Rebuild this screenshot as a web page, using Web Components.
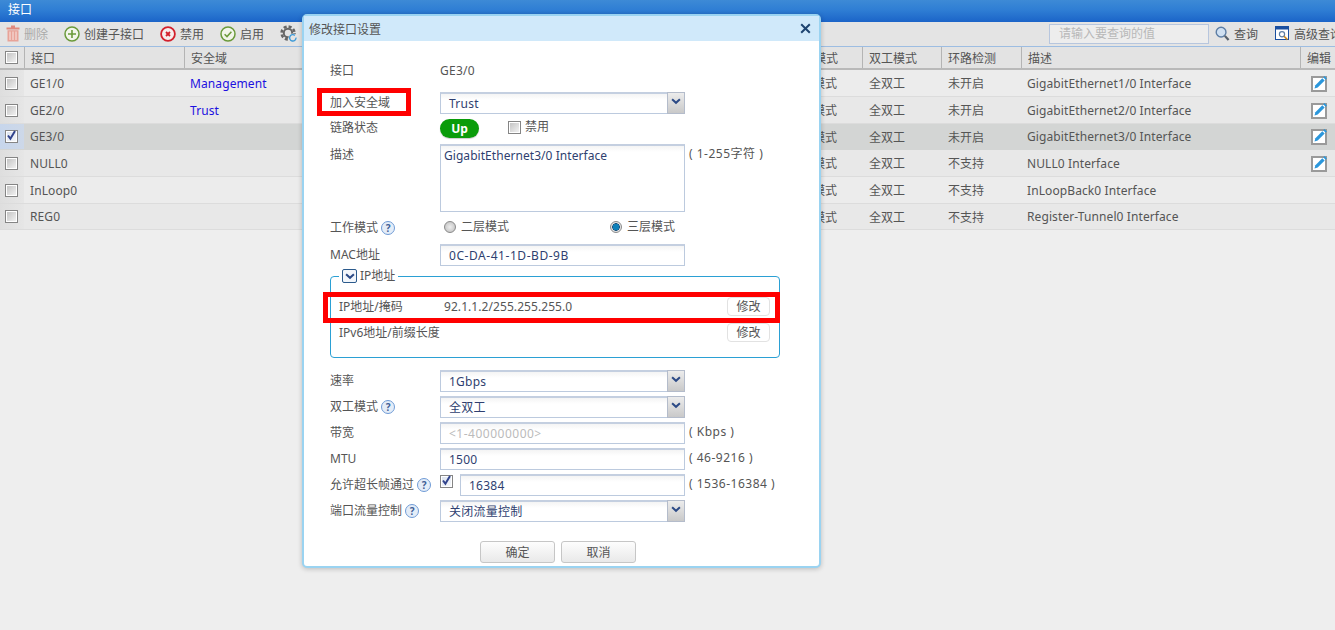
<!DOCTYPE html>
<html lang="zh">
<head>
<meta charset="utf-8">
<title>接口</title>
<style>
  html, body { margin: 0; padding: 0; height: 100%; overflow: hidden; background: #eeeeee; }
  body { font: 12px "Noto Sans", "Noto Sans CJK SC", sans-serif; color: #555; }
</style>
</head>
<body>
<if-app>
  <if-titlebar>接口</if-titlebar>
  <if-toolbar></if-toolbar>
  <if-table></if-table>
  <if-dialog heading="修改接口设置">
    <form-row center>
      <span slot="label">接口</span>
      <span style="letter-spacing:.25px">GE3/0</span>
    </form-row>
    <form-row style="margin-top:11px">
      <span slot="label">加入安全域</span>
      <text-box select>Trust</text-box>
    </form-row>
    <form-row style="margin-top:3px">
      <span slot="label">链路状态</span>
      <link-state></link-state>
    </form-row>
    <form-row style="margin-top:5px">
      <span slot="label">描述</span>
      <text-box tall>GigabitEthernet3/0 Interface</text-box>
      <span slot="suffix">( 1-255字符 )</span>
    </form-row>
    <form-row style="margin-top:5px" help>
      <span slot="label">工作模式</span>
      <mode-choice></mode-choice>
    </form-row>
    <form-row style="margin-top:5px">
      <span slot="label">MAC地址</span>
      <text-box style="letter-spacing:.55px">0C-DA-41-1D-BD-9B</text-box>
    </form-row>
    <ip-group></ip-group>
    <form-row style="margin-top:12px">
      <span slot="label">速率</span>
      <text-box select>1Gbps</text-box>
    </form-row>
    <form-row style="margin-top:4px" help>
      <span slot="label">双工模式</span>
      <text-box select>全双工</text-box>
    </form-row>
    <form-row style="margin-top:4px">
      <span slot="label">带宽</span>
      <text-box muted style="letter-spacing:.5px">&lt;1-400000000&gt;</text-box>
      <span slot="suffix">( Kbps )</span>
    </form-row>
    <form-row style="margin-top:4px">
      <span slot="label">MTU</span>
      <text-box>1500</text-box>
      <span slot="suffix">( 46-9216 )</span>
    </form-row>
    <form-row style="margin-top:4px" help>
      <span slot="label">允许超长帧通过</span>
      <jumbo-field>16384</jumbo-field>
      <span slot="suffix">( 1536-16384 )</span>
    </form-row>
    <form-row style="margin-top:4px" help>
      <span slot="label">端口流量控制</span>
      <text-box select>关闭流量控制</text-box>
    </form-row>
    <dialog-actions></dialog-actions>
    <red-mark style="left:13px;top:72px;width:94px;height:28px"></red-mark>
    <red-mark style="left:19px;top:276px;width:457px;height:31px"></red-mark>
  </if-dialog>
</if-app>

<script>
const ICONS = {
  trash: `<svg width="14" height="17" viewBox="0 0 14 17"><path d="M5 1.5h4M0.5 3.6h13" stroke="#e0897d" stroke-width="2" fill="none"/><path d="M1.5 5.2h11v11.3h-11z" fill="#e8a398"/><path d="M4 6.5v8.5M7 6.5v8.5M10 6.5v8.5" stroke="#f6dcd7" stroke-width="1.2"/></svg>`,
  plus: `<svg width="16" height="16" viewBox="0 0 16 16"><circle cx="8" cy="8" r="7" fill="#f2f5ea" stroke="#6a9a3a" stroke-width="1.5"/><path d="M8 4v8M4 8h8" stroke="#6a9a3a" stroke-width="1.6"/></svg>`,
  stop: `<svg width="16" height="16" viewBox="0 0 16 16"><circle cx="8" cy="8" r="6.9" fill="#f6eeee" stroke="#d3202c" stroke-width="1.8"/><path d="M6 6l4 4M10 6l-4 4" stroke="#d3202c" stroke-width="1.8"/></svg>`,
  ok: `<svg width="16" height="16" viewBox="0 0 16 16"><circle cx="8" cy="8" r="7" fill="#f2f5ea" stroke="#6a9a3a" stroke-width="1.5"/><path d="M4.6 8.2l2.4 2.4 4.4-4.8" fill="none" stroke="#6a9a3a" stroke-width="1.5"/></svg>`,
  gear: `<svg width="18" height="18" viewBox="0 0 18 18"><circle cx="8" cy="8" r="6.4" fill="none" stroke="#666" stroke-width="2.6" stroke-dasharray="3 2"/><circle cx="8" cy="8" r="4.2" fill="none" stroke="#666" stroke-width="2"/><circle cx="13" cy="13" r="4.6" fill="#e4e4e4"/><path d="M16 12.6a3.2 3.2 0 1 1-1.1-2.2" fill="none" stroke="#3c9ad8" stroke-width="1.4"/></svg>`,
  search: `<svg width="15" height="16" viewBox="0 0 16 17"><circle cx="6.5" cy="6.5" r="5.2" fill="#cfe0f2" stroke="#5d7ea5" stroke-width="1.5"/><path d="M10.5 10.5l4 4.5" stroke="#56606c" stroke-width="2.4"/></svg>`,
  advanced: `<svg width="15" height="15" viewBox="0 0 15 15"><rect x="0.5" y="0.5" width="13" height="13" fill="#fff" stroke="#1a4fa0"/><path d="M1 1h12v2.5H1z" fill="#1a4fa0"/><circle cx="7" cy="8.2" r="2.6" fill="none" stroke="#5d7ea5" stroke-width="1.2"/><path d="M9 10.2l3.4 3.4" stroke="#c8841c" stroke-width="1.6"/></svg>`,
  edit: `<svg width="17" height="17" viewBox="0 0 17 17" style="overflow:visible"><rect x="1" y="2" width="14" height="14" fill="#fff" stroke="#9a9a9a" stroke-width="2"/><path d="M3.5 13.5l0.9-3.3 6.9-7 2.4 2.4-7 7z" fill="#2b97dc"/><path d="M12.2 2.3l1.3-1.3 2.4 2.4-1.3 1.3z" fill="#2b97dc"/></svg>`,
  chevron: `<svg width="10" height="7" viewBox="0 0 10 7"><path d="M1.1 1.2l3.9 3.6 3.9-3.6" fill="none" stroke="#2c4a86" stroke-width="2"/></svg>`
};

class IfApp extends HTMLElement {
  constructor() {
    super();
    this.attachShadow({ mode: 'open' });
    this.shadowRoot.innerHTML = `
      <style>
        :host { display: block; position: relative; width: 1335px; height: 630px; overflow: hidden; background: #eeeeee; }
      </style>
      <slot></slot>
    `;
  }
}

class IfTitlebar extends HTMLElement {
  constructor() {
    super();
    this.attachShadow({ mode: 'open' });
    this.shadowRoot.innerHTML = `
      <style>
        :host { display: flex; align-items: center; box-sizing: border-box; height: 22px; padding: 0 8px 5px; color: #fff; background: linear-gradient(#3d8ad6, #2f7ed4 45%, #1b64c8); }
      </style>
      <slot></slot>
    `;
  }
}

class ToolBtn extends HTMLElement {
  constructor() {
    super();
    this.attachShadow({ mode: 'open' });
    this.shadowRoot.innerHTML = `
      <style>
        :host { display: inline-flex; flex: none; align-items: center; gap: 4px; color: #555; white-space: nowrap; }
        :host([disabled]) { color: #aaa; }
        svg { display: block; }
      </style>
      <span id="icon"></span><slot></slot>
    `;
  }
  connectedCallback() {
    this.shadowRoot.getElementById('icon').innerHTML = ICONS[this.getAttribute('icon')];
  }
}

class IfToolbar extends HTMLElement {
  constructor() {
    super();
    this.attachShadow({ mode: 'open' });
    this.shadowRoot.innerHTML = `
      <style>
        :host { display: flex; align-items: center; box-sizing: content-box; height: 23px; padding: 0 0 1px 6px; background: #e4e4e4; border-bottom: 1px solid #9dbde2; overflow: hidden; }
        .left { display: flex; align-items: center; gap: 16px; }
        .right { display: flex; align-items: center; margin-left: auto; flex: none; width: 286px; }
        .search { flex: none; box-sizing: border-box; width: 160px; height: 20px; line-height: 18px; padding-left: 9px; border: 1px solid #b7c6de; background: #ededed; color: #b8b8b8; margin-right: 6px; }
        .right tool-btn + tool-btn { margin-left: 17px; }
      </style>
      <div class="left">
        <tool-btn icon="trash" disabled>删除</tool-btn>
        <tool-btn icon="plus">创建子接口</tool-btn>
        <tool-btn icon="stop">禁用</tool-btn>
        <tool-btn icon="ok">启用</tool-btn>
        <tool-btn icon="gear"></tool-btn>
      </div>
      <div class="right">
        <div class="search">请输入要查询的值</div>
        <tool-btn icon="search">查询</tool-btn>
        <tool-btn icon="advanced">高级查询</tool-btn>
      </div>
    `;
  }
}

class CheckBox extends HTMLElement {
  constructor() {
    super();
    this.attachShadow({ mode: 'open' });
    this.shadowRoot.innerHTML = `
      <style>
        :host { display: inline-block; box-sizing: border-box; width: 13px; height: 13px; border: 1px solid #858585; background: #fff; padding: 1px; flex: none; }
        .in { width: 9px; height: 9px; background: linear-gradient(135deg, #c4c4c4, #f1f1f1); position: relative; }
        :host([checked]) .in { background: linear-gradient(135deg, #dce3ef, #f4f6fa); }
        svg { display: none; position: absolute; left: -1px; top: -2px; }
        :host([checked]) svg { display: block; }
      </style>
      <div class="in"><svg width="11" height="11" viewBox="0 0 11 11"><path d="M2 5.5l2.4 3.2L9 1" fill="none" stroke="#31438c" stroke-width="2"/></svg></div>
    `;
  }
}

class IfTable extends HTMLElement {
  constructor() {
    super();
    this.attachShadow({ mode: 'open' });
    const rows = [
      { name: 'GE1/0', zone: 'Management', loop: '未开启', desc: 'GigabitEthernet1/0 Interface', edit: true, h: 27 },
      { name: 'GE2/0', zone: 'Trust', loop: '未开启', desc: 'GigabitEthernet2/0 Interface', edit: true, h: 27 },
      { name: 'GE3/0', zone: '', loop: '未开启', desc: 'GigabitEthernet3/0 Interface', edit: true, h: 26, sel: true },
      { name: 'NULL0', zone: '', loop: '不支持', desc: 'NULL0 Interface', edit: true, h: 27 },
      { name: 'InLoop0', zone: '', loop: '不支持', desc: 'InLoopBack0 Interface', h: 27 },
      { name: 'REG0', zone: '', loop: '不支持', desc: 'Register-Tunnel0 Interface', h: 26 }
    ];
    this.shadowRoot.innerHTML = `
      <style>
        :host { display: block; }
        .row { display: grid; grid-template-columns: 24px 160px 599px 79px 79px 80px 279px 35px; align-items: stretch; box-sizing: border-box; border-bottom: 1px solid #dcdcdc; background: #e8e8e8; }
        .row.odd { background: #ececec; }
        .row.sel { background: #d3d5d4; border-bottom-color: #d3d5d4; }
        .row > div { display: flex; align-items: center; padding-left: 6px; min-width: 0; white-space: nowrap; }
        .row > .chk { padding-left: 5px; background: linear-gradient(90deg, #dedede, #e6e6e6); }
        .row.sel > .chk { background: linear-gradient(90deg, #c7d6ec, #cdd8e8); }
        .row > .edit { padding-left: 11px; }
        .row > .lat { letter-spacing: .1px; }
        .head { height: 23px; background: #e3e3e3; border-bottom: 2px solid #b9b9b9; }
        .head > div { border-left: 1px solid #b4b4b4; }
        .head > .chk { border-left: 0; background: #e3e3e3; }
        .head > .edit { padding-left: 6px; }
        .row > .zone { color: #1c10e0; }
        svg { display: block; }
      </style>
      <div class="row head">
        <div class="chk"><check-box></check-box></div>
        <div>接口</div><div>安全域</div><div>工作模式</div><div>双工模式</div><div>环路检测</div><div>描述</div><div class="edit">编辑</div>
      </div>
      ${rows.map((r, i) => `
        <div class="row ${i % 2 ? '' : 'odd'} ${r.sel ? 'sel' : ''}" style="height:${r.h}px">
          <div class="chk"><check-box ${r.sel ? 'checked' : ''}></check-box></div>
          <div class="lat">${r.name}</div>
          <div class="zone lat">${r.zone}</div>
          <div>三层模式</div>
          <div style="padding-left:7px">全双工</div>
          <div style="padding-left:7px">${r.loop}</div>
          <div class="lat">${r.desc}</div>
          <div class="edit">${r.edit ? ICONS.edit : ''}</div>
        </div>`).join('')}
    `;
  }
}

class IfDialog extends HTMLElement {
  constructor() {
    super();
    this.attachShadow({ mode: 'open' });
    this.shadowRoot.innerHTML = `
      <style>
        :host { display: block; position: absolute; left: 302px; top: 14px; box-sizing: border-box; width: 519px; height: 554px; background: #fff; border: 2px solid #9ad3f1; border-radius: 5px; box-shadow: 0 1px 5px rgba(0,0,0,.22); }
        .head { display: flex; align-items: center; justify-content: space-between; box-sizing: border-box; height: 25px; padding: 0 8px 0 5px; background: #d0e9fa; color: #555; }
        .body { padding: 18px 0 0 26px; }
        svg { display: block; }
      </style>
      <div class="head">
        <span id="title"></span>
        <svg width="11" height="11" viewBox="0 0 11 11"><path d="M1.2 1.2l8.6 8.6M9.8 1.2l-8.6 8.6" stroke="#1d4470" stroke-width="2"/></svg>
      </div>
      <div class="body"><slot></slot></div>
    `;
  }
  connectedCallback() {
    this.shadowRoot.getElementById('title').textContent = this.getAttribute('heading');
  }
}

class FormRow extends HTMLElement {
  constructor() {
    super();
    this.attachShadow({ mode: 'open' });
    this.shadowRoot.innerHTML = `
      <style>
        :host { display: grid; grid-template-columns: 110px 245px auto; align-items: start; min-height: 22px; line-height: 22px; }
        :host([center]) { height: 22px; line-height: 23px; }
        .label { display: flex; align-items: center; gap: 3px; white-space: nowrap; }
        .suffix { padding-left: 4px; line-height: 20px; letter-spacing: .5px; white-space: nowrap; }
        help-mark { display: none; }
        :host([help]) help-mark { display: inline-flex; }
      </style>
      <div class="label"><slot name="label"></slot><help-mark></help-mark></div>
      <div class="control"><slot></slot></div>
      <div class="suffix"><slot name="suffix"></slot></div>
    `;
  }
}

class HelpMark extends HTMLElement {
  constructor() {
    super();
    this.attachShadow({ mode: 'open' });
    this.shadowRoot.innerHTML = `
      <style>
        :host { display: inline-flex; align-items: center; justify-content: center; box-sizing: border-box; width: 14px; height: 14px; border-radius: 50%; border: 1.5px solid #6f9bd6; background: #e4edf8; color: #3f5f96; font: bold 10px/1 "Noto Sans", sans-serif; }
      </style>
      ?
    `;
  }
}

class TextBox extends HTMLElement {
  constructor() {
    super();
    this.attachShadow({ mode: 'open' });
    this.shadowRoot.innerHTML = `
      <style>
        :host { display: flex; box-sizing: border-box; height: 22px; border: 1px solid #bccade; border-top: 2px solid #c4cfe0; background: linear-gradient(#f4f4f4, #fff 6px); color: #2f3f70; align-items: center; padding-left: 8px; position: relative; white-space: nowrap; letter-spacing: .25px; }
        :host([muted]) { color: #bbb; }
        :host([tall]) { height: 68px; align-items: flex-start; padding: 1px 0 0 3px; line-height: 17px; letter-spacing: .05px; }
        .arrow { display: none; position: absolute; right: -1px; top: -2px; bottom: -1px; width: 18px; align-items: center; justify-content: center; background: linear-gradient(#ececec, #c9c9c9); border: 1px solid #b4bccb; box-sizing: border-box; padding-bottom: 3px; }
        :host([select]) .arrow { display: flex; }
        svg { display: block; }
      </style>
      <slot></slot>
      <div class="arrow">${ICONS.chevron}</div>
    `;
  }
}

class LinkState extends HTMLElement {
  constructor() {
    super();
    this.attachShadow({ mode: 'open' });
    this.shadowRoot.innerHTML = `
      <style>
        :host { display: flex; align-items: flex-start; padding-top: 2px; }
        .pill { display: flex; align-items: center; justify-content: center; width: 39px; height: 19px; border-radius: 10px; background: #0a9c0a; color: #fff; font-weight: bold; box-shadow: 0 1px 1px rgba(0,0,0,.2); }
        .off { display: flex; align-items: center; gap: 4px; margin-left: 29px; margin-top: -3px; }
      </style>
      <div class="pill">Up</div>
      <div class="off"><check-box></check-box><span>禁用</span></div>
    `;
  }
}

class RadioDot extends HTMLElement {
  constructor() {
    super();
    this.attachShadow({ mode: 'open' });
    this.shadowRoot.innerHTML = `
      <style>
        :host { display: block; box-sizing: border-box; width: 12px; height: 12px; border-radius: 50%; border: 1px solid #8a8a8a; background: radial-gradient(circle, #ededed, #bcbcbc); }
        :host([on]) { background: radial-gradient(circle, #0e7fb8 0 3px, #1f4f78 3.6px, #e4e4e4 4px); }
      </style>
    `;
  }
}

class ModeChoice extends HTMLElement {
  constructor() {
    super();
    this.attachShadow({ mode: 'open' });
    this.shadowRoot.innerHTML = `
      <style>
        :host { display: flex; padding-left: 4px; line-height: 20px; }
        label { display: flex; align-items: center; gap: 5px; width: 166px; flex: none; white-space: nowrap; }
      </style>
      <label><radio-dot></radio-dot>二层模式</label>
      <label><radio-dot on></radio-dot>三层模式</label>
    `;
  }
}

class IpGroup extends HTMLElement {
  constructor() {
    super();
    this.attachShadow({ mode: 'open' });
    this.shadowRoot.innerHTML = `
      <style>
        :host { display: block; width: 450px; margin-top: 3px; }
        fieldset { margin: 0; padding: 10px 9px 11px 8px; border: 1px solid #2ba0d4; border-radius: 4px; height: 89px; box-sizing: border-box; }
        legend { display: flex; align-items: center; gap: 3px; padding: 0 3px; height: 14px; line-height: 14px; }
        .fold { display: flex; align-items: center; justify-content: center; box-sizing: border-box; width: 15px; height: 14px; border: 1px solid #2b5a8c; border-radius: 2px; background: #f2f6fb; }
        .row { display: grid; grid-template-columns: 105px 1fr 43px; align-items: center; height: 26px; white-space: nowrap; }
        .val { letter-spacing: .07px; }
        .btn { display: flex; align-items: center; justify-content: center; height: 19px; box-sizing: border-box; border: 1px solid #e2e2e2; border-radius: 4px; background: #fff; }
        svg { display: block; }
      </style>
      <fieldset>
        <legend><span class="fold">${ICONS.chevron}</span>IP地址</legend>
        <div class="row"><span>IP地址/掩码</span><span class="val">92.1.1.2/255.255.255.0</span><span class="btn">修改</span></div>
        <div class="row"><span>IPv6地址/前缀长度</span><span></span><span class="btn">修改</span></div>
      </fieldset>
    `;
  }
}

class JumboField extends HTMLElement {
  constructor() {
    super();
    this.attachShadow({ mode: 'open' });
    this.shadowRoot.innerHTML = `
      <style>
        :host { display: flex; align-items: flex-start; gap: 7px; }
        text-box { flex: 1; }
        check-box { margin-top: 1px; }
      </style>
      <check-box checked></check-box>
      <text-box><slot></slot></text-box>
    `;
  }
}

class DialogActions extends HTMLElement {
  constructor() {
    super();
    this.attachShadow({ mode: 'open' });
    this.shadowRoot.innerHTML = `
      <style>
        :host { display: flex; gap: 6px; margin: 19px 0 0 150px; }
        .btn { display: flex; align-items: center; justify-content: center; box-sizing: border-box; width: 75px; height: 22px; border: 1px solid #c6c6c6; border-radius: 3px; background: linear-gradient(#fdfdfd, #e9e9e9); color: #555; }
      </style>
      <div class="btn">确定</div>
      <div class="btn">取消</div>
    `;
  }
}

class RedMark extends HTMLElement {
  constructor() {
    super();
    this.attachShadow({ mode: 'open' });
    this.shadowRoot.innerHTML = `
      <style>
        :host { display: block; position: absolute; box-sizing: border-box; border: 5px solid #ff0000; }
      </style>
    `;
  }
}

customElements.define('if-app', IfApp);
customElements.define('if-titlebar', IfTitlebar);
customElements.define('tool-btn', ToolBtn);
customElements.define('if-toolbar', IfToolbar);
customElements.define('check-box', CheckBox);
customElements.define('if-table', IfTable);
customElements.define('if-dialog', IfDialog);
customElements.define('form-row', FormRow);
customElements.define('help-mark', HelpMark);
customElements.define('text-box', TextBox);
customElements.define('link-state', LinkState);
customElements.define('radio-dot', RadioDot);
customElements.define('mode-choice', ModeChoice);
customElements.define('ip-group', IpGroup);
customElements.define('jumbo-field', JumboField);
customElements.define('dialog-actions', DialogActions);
customElements.define('red-mark', RedMark);
</script>
</body>
</html>
